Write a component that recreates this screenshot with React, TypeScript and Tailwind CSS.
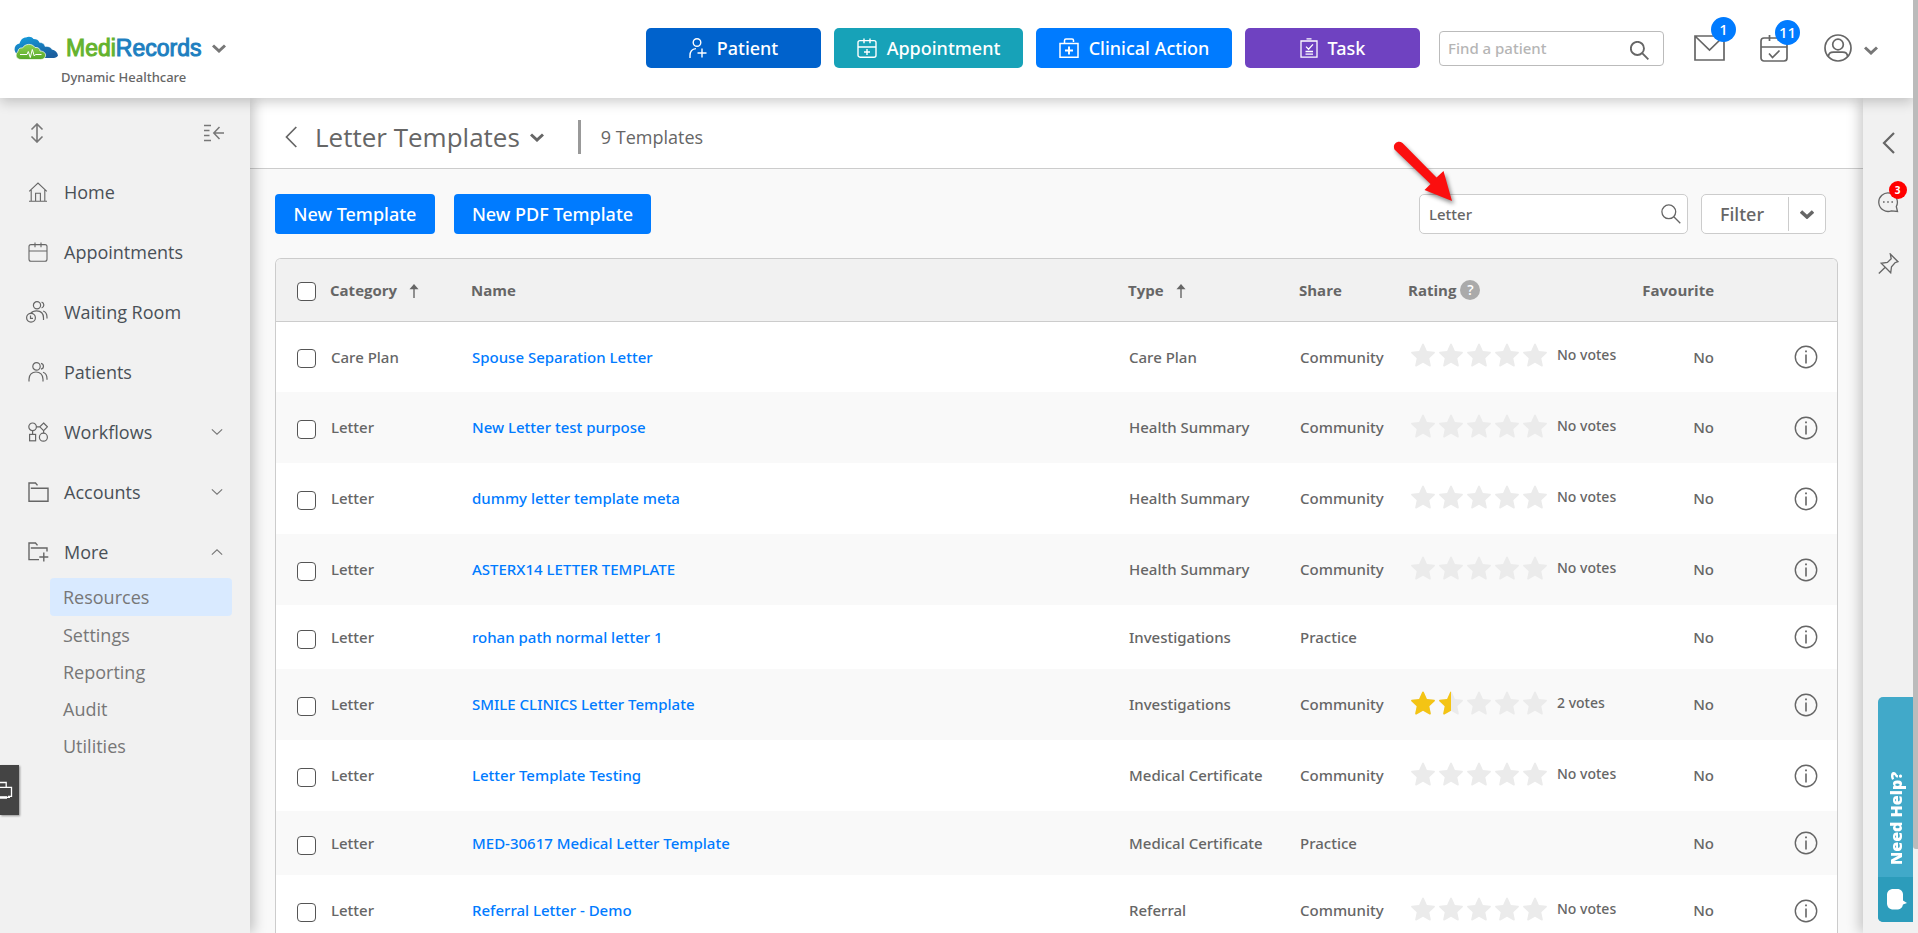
import React from "react";

type IconProps = { className?: string; children: React.ReactNode; box?: string; sw?: number };

function Icon({ className = "", children, box = "0 0 24 24", sw = 1.5 }: IconProps) {
  return (
    <svg
      viewBox={box}
      fill="none"
      stroke="currentColor"
      strokeWidth={sw}
      className={"shrink-0 " + className}
      aria-hidden="true"
    >
      {children}
    </svg>
  );
}

const Chevron = ({ className = "", sw = 3 }: { className?: string; sw?: number }) => (
  <Icon box="0 0 14 9" sw={sw} className={className}>
    <path d="M1 1.5 7 7l6-5.5" />
  </Icon>
);

const SearchIcon = ({ className = "", sw = 1.5 }: { className?: string; sw?: number }) => (
  <Icon box="0 0 20 20" sw={sw} className={className}>
    <circle cx="7.8" cy="7.8" r="6.9" />
    <path d="m12.8 12.8 6.5 6.5" />
  </Icon>
);

const icons = {
  home: (
    <Icon box="0 0 20 20" sw={1.1} className="size-5">
      <path d="M1.2 9.4 10 1l8.8 8.4M3.2 8v11M16.8 8v11M1 19.2h18M7.6 19v-7.7h4.8V19" />
    </Icon>
  ),
  calendar: (
    <Icon box="0 0 20 20" sw={1.1} className="size-5">
      <rect x="1" y="2.6" width="18" height="16.6" rx="2" />
      <path d="M1 9h18M7 .4v4.8M13 .4v4.8" />
    </Icon>
  ),
  waiting: (
    <Icon box="0 0 22 22" sw={1.2} className="-ml-0.5 size-[22px]">
      <circle cx="11" cy="4.3" r="3.6" />
      <path d="M15.6 1.2a3 3 0 0 1 0 5.8M4.8 12.4C6 10.6 8.3 9.8 10.6 9.8c4.5 0 6.9 2.7 6.9 7.2v2M17.2 10c2.8 1 3.8 3.2 3.8 6.2v1.2" />
      <circle cx="5" cy="16.8" r="4.4" />
      <path d="M4.5 14.5v2.8H7" />
    </Icon>
  ),
  patients: (
    <Icon box="0 0 20 20" sw={1.2} className="size-5">
      <circle cx="8.5" cy="4.4" r="3.7" />
      <path d="M1 19.5v-2.3C1 12.8 4 10 8 10s7 2.8 7 7.2v2.3M13 1.3a3 3 0 0 1 0 5.9M15 10.2c2.7 1 4 3.2 4 6.2v1.4" />
    </Icon>
  ),
  workflows: (
    <Icon box="0 0 20 20" sw={1.2} className="size-5">
      <circle cx="4.6" cy="4.8" r="3.8" />
      <path d="M8.4 4.8h3.4M15.6 1l3.8 3.8-3.8 3.8-3.8-3.8zM4.6 8.6v3.6M15.6 8.6v2.6" />
      <rect x="1.6" y="12.4" width="6" height="6.4" />
      <circle cx="15.4" cy="15.2" r="4" />
    </Icon>
  ),
  accounts: (
    <Icon box="0 0 21 20" sw={1.4} className="h-5 w-[21px]">
      <path d="M2.8 6.2h17.2v13H1V1h6.5l2 2.4" />
    </Icon>
  ),
  more: (
    <Icon box="0 0 21 20" sw={1.4} className="h-5 w-[21px]">
      <path d="M2.8 6h16.2v3.5M11 17.6H1V1h6.5l2 2.4M15.8 10.5v9M11.3 15h9" />
    </Icon>
  ),
};

const navItems = [
  { label: "Home", icon: icons.home },
  { label: "Appointments", icon: icons.calendar },
  { label: "Waiting Room", icon: icons.waiting },
  { label: "Patients", icon: icons.patients },
  { label: "Workflows", icon: icons.workflows, arrow: "down" },
  { label: "Accounts", icon: icons.accounts, arrow: "down" },
  { label: "More", icon: icons.more, arrow: "up" },
];

const actions = [
  {
    label: "Patient",
    tone: "w-[175px] bg-[#0062cc]",
    icon: (
      <Icon box="0 0 18 20" sw={1.4} className="h-5 w-[18px]">
        <circle cx="8" cy="4.5" r="3.8" />
        <path d="M1 20v-2.5C1 13.5 3.2 11 7 10.6M13 10.5v9M8.5 15h9" />
      </Icon>
    ),
  },
  {
    label: "Appointment",
    tone: "w-[189px] bg-[#17a2b8]",
    icon: (
      <Icon box="0 0 20 20" sw={1.4} className="size-5">
        <rect x="1" y="2.6" width="18" height="16.6" rx="2" />
        <path d="M1 9h18M7 .4v4.8M13 .4v4.8M10 11v6M7 14h6" />
      </Icon>
    ),
  },
  {
    label: "Clinical Action",
    tone: "w-[196px] bg-[#007bff]",
    icon: (
      <Icon box="0 0 20 20" sw={1.5} className="size-5">
        <path d="M1 5.5h18v13.7H1zM5.5 5V2.5Q5.5 1 7 1h6q1.5 0 1.5 1.5V4" />
        <path d="M10 8.5v8M6 12.5h8" strokeWidth={1.9} />
      </Icon>
    ),
  },
  {
    label: "Task",
    tone: "w-[175px] bg-[#6f42c1]",
    icon: (
      <Icon box="0 0 18 20" sw={1.3} className="h-5 w-[18px]">
        <path d="M1 3h16v16.2H1zM6.5.8h5M6 8.6l2.6 2.6L13 6.4M5.5 13.5h7.5M5.5 16.2h7.5" />
      </Icon>
    ),
  },
];

type Row = { category: string; name: string; type: string; share: string; rating?: number; votes?: string };

const rows: Row[] = [
  { category: "Care Plan", name: "Spouse Separation Letter", type: "Care Plan", share: "Community", rating: 0, votes: "No votes" },
  { category: "Letter", name: "New Letter test purpose", type: "Health Summary", share: "Community", rating: 0, votes: "No votes" },
  { category: "Letter", name: "dummy letter template meta", type: "Health Summary", share: "Community", rating: 0, votes: "No votes" },
  { category: "Letter", name: "ASTERX14 LETTER TEMPLATE", type: "Health Summary", share: "Community", rating: 0, votes: "No votes" },
  { category: "Letter", name: "rohan path normal letter 1", type: "Investigations", share: "Practice" },
  { category: "Letter", name: "SMILE CLINICS Letter Template", type: "Investigations", share: "Community", rating: 1.5, votes: "2 votes" },
  { category: "Letter", name: "Letter Template Testing", type: "Medical Certificate", share: "Community", rating: 0, votes: "No votes" },
  { category: "Letter", name: "MED-30617 Medical Letter Template", type: "Medical Certificate", share: "Practice" },
  { category: "Letter", name: "Referral Letter - Demo", type: "Referral", share: "Community", rating: 0, votes: "No votes" },
];

const starPath =
  "M12 .6c.4 0 .7.3.9.7l3 6.7 7.2.8c.8.1 1.1 1 .5 1.5l-5.3 4.9 1.5 7.4c.1.7-.5 1.2-1.2.8L12 19.7l-6.6 3.7c-.7.4-1.3-.1-1.2-.8l1.5-7.4L.4 10.3c-.6-.5-.3-1.4.5-1.5l7.2-.8 3-6.7c.2-.4.5-.7.9-.7z";

function Star({ fill }: { fill: number }) {
  return (
    <svg viewBox="0 0 24 24" className="size-6" aria-hidden="true">
      <path d={starPath} fill="#ebebeb" />
      {fill >= 1 && <path d={starPath} fill="#f4c414" />}
      {fill === 0.5 && (
        <path
          d="M12 .6c-.4 0-.7.3-.9.7L8.1 8l-7.2.8c-.8.1-1.1 1-.5 1.5l5.3 4.9-1.5 7.4c-.1.7.5 1.2 1.2.8l6.6-3.7z"
          fill="#f4c414"
        />
      )}
    </svg>
  );
}

function Checkbox({ label }: { label: string }) {
  return (
    <input
      type="checkbox"
      aria-label={label}
      className="mt-1 block size-[19px] appearance-none rounded-[4px] border border-[#555] bg-white"
    />
  );
}

const SortUp = () => (
  <svg viewBox="0 0 10 14" className="mt-0.5 h-3.5 w-2.5 shrink-0" aria-hidden="true">
    <path d="M5 0 9.5 5.2H.5z" fill="#666" />
    <path d="M5 3v11" stroke="#666" strokeWidth="1.4" />
  </svg>
);

function Logo() {
  return (
    <svg viewBox="0 0 44 24" className="h-6 w-11" aria-hidden="true">
      <defs>
        <linearGradient id="sky" x1="0" y1="0" x2="0.6" y2="1">
          <stop offset="0" stopColor="#14a0e0" />
          <stop offset="1" stopColor="#1b5f9f" />
        </linearGradient>
        <linearGradient id="leaf" x1="0" y1="0" x2="0" y2="1">
          <stop offset="0" stopColor="#8fd14f" />
          <stop offset="1" stopColor="#56a82a" />
        </linearGradient>
      </defs>
      <path
        d="M3 18C-1 15 0 8.500 5.500 7.500 7 3 9.500 1.500 12 1.500c3-1.500 6-.5 7.500 1.500 3 0 5 1 6 3.500 3 0 5 1.500 5.500 4 3-.5 6 .5 7 3 3 .5 5.500 3 6 6-1 2-3 2.500-6 2.500H12z"
        fill="url(#sky)"
      />
      <path d="M25.500 6.500c3 0 5 1.500 5.500 4 3-.5 6 .5 7 3" fill="none" stroke="#fff" strokeWidth=".4" />
      <path
        d="M7 23.500c-5 0-6.500-5.500-3-8 0-3 2.500-4 4.500-3.500C11 7.500 18 7 21 11.500c3-.5 5 1 5 3.500 4 0 6 2.500 5.500 5-.4 2.300-2.500 3.500-5 3.500z"
        fill="url(#leaf)"
        stroke="#fff"
        strokeWidth=".7"
      />
      <path d="M6 18.500h7l1.300-3 2 6 2-8 2 6.500 1.200-1.500h6" fill="none" stroke="#fff" strokeWidth="1" />
    </svg>
  );
}

function Header() {
  return (
    <header className="relative z-20 flex h-[98px] shrink-0 items-start justify-between bg-white pl-3.5 pr-[35px] shadow-[0_4px_12px_rgba(0,0,0,0.2)]">
      <div className="pt-8">
        <button type="button" className="flex h-8 items-center" aria-label="MediRecords menu">
          <Logo />
          <span className="ml-2 font-['Liberation_Sans',Arial,sans-serif] text-[23px] leading-8 text-[#1e7fc0] [-webkit-text-stroke:1px_currentColor]">
            <span className="text-[#65b32e]">Medi</span>Records
          </span>
          <Chevron className="ml-2.5 h-[9px] w-3.5 text-[#777]" />
        </button>
        <p className="pl-[47px] text-[13px] font-medium leading-[26px] text-[#666]">Dynamic Healthcare</p>
      </div>
      <div className="flex items-center pt-7 text-[#666]">
        <div className="flex gap-[13px]">
          {actions.map((a) => (
            <button
              key={a.label}
              type="button"
              className={"flex h-10 items-center justify-center gap-2.5 rounded-[5px] text-lg font-medium text-white " + a.tone}
            >
              {a.icon}
              {a.label}
            </button>
          ))}
        </div>
        <div className="ml-[19px] flex h-[35px] w-[225px] items-center rounded-[4px] border border-[#bbb] bg-white pl-2 pr-3.5">
          <input
            type="text"
            aria-label="Find a patient"
            placeholder="Find a patient"
            className="min-w-0 flex-1 bg-transparent text-[15px] font-medium outline-none placeholder:text-[#b5b5b5]"
          />
          <SearchIcon className="mt-1 size-[19px]" sw={2} />
        </div>
        <button type="button" aria-label="Messages" className="relative ml-[30px]">
          <Icon box="0 0 31 26" sw={1.7} className="h-[26px] w-[31px]">
            <path d="M1 1h29v24H1zM1.500 1.500l14 13.500 14-13.500" />
          </Icon>
          <span className="absolute -top-[18px] left-[17px] flex size-[25px] items-center justify-center rounded-full bg-[#007bff] text-[15px] font-medium text-white">
            1
          </span>
        </button>
        <button type="button" aria-label="Calendar" className="relative ml-[35px]">
          <Icon box="0 0 28 28" sw={1.7} className="size-7">
            <rect x="1" y="4" width="26" height="23" rx="3" />
            <path d="M1 13h26M9.500 1v6M18.500 1v6M9 19.500l3.500 4 7-7" />
          </Icon>
          <span className="absolute -top-3.5 left-[15px] flex size-[25px] items-center justify-center rounded-full bg-[#007bff] text-[15px] font-medium text-white">
            11
          </span>
        </button>
        <button type="button" aria-label="Account" className="ml-9 flex items-center gap-3">
          <Icon box="0 0 28 28" sw={1.7} className="size-7">
            <circle cx="14" cy="14" r="13" />
            <circle cx="14" cy="10.5" r="5.3" />
            <path d="M4.500 22.500c0-3 2.500-4.300 5-4.300h9c2.500 0 5 1.300 5 4.300" />
          </Icon>
          <Chevron className="mt-1 h-[9px] w-3.5 text-[#777]" />
        </button>
      </div>
    </header>
  );
}

function Sidebar() {
  return (
    <aside className="relative z-10 w-[250px] shrink-0 bg-[#f1f1f1] shadow-[4px_0_12px_rgba(0,0,0,0.22)]">
      <div className="flex h-16 items-center justify-between pl-[30px] pr-[26px] pt-1.5 text-[#777]">
        <button type="button" aria-label="Resize menu">
          <Icon box="0 0 14 20" sw={1.6} className="h-5 w-3.5">
            <path d="M7 1.500v17M1.500 6.500 7 1l5.500 5.500M1.500 13.500 7 19l5.500-5.500" />
          </Icon>
        </button>
        <button type="button" aria-label="Collapse menu">
          <Icon box="0 0 20 18" sw={1.5} className="h-[18px] w-5">
            <path d="M0 1.500h7M0 6.500h5.500M0 11.500h5.500M0 16.500h7M9.500 9H20M15.500 3 9.800 9l5.700 6" />
          </Icon>
        </button>
      </div>
      <nav className="font-['Open_Sans',sans-serif] text-lg font-medium">
        {navItems.map((n) => (
          <a key={n.label} href="#" className="flex h-[60px] items-center pl-7 pr-[27px] text-[#495057]">
            <span className="flex w-9 items-center text-[#666]">{n.icon}</span>
            <span className="flex-1">{n.label}</span>
            {n.arrow && (
              <Chevron sw={1.3} className={n.arrow === "up" ? "h-2 w-3 rotate-180 text-[#777]" : "h-2 w-3 text-[#777]"} />
            )}
          </a>
        ))}
        <div className="-mt-1 ml-[50px] mr-[18px] text-[#777]">
          <a href="#" className="flex h-[38px] items-center rounded-[4px] bg-[#d9eaff] pl-[13px]">Resources</a>
          {["Settings", "Reporting", "Audit", "Utilities"].map((s) => (
            <a key={s} href="#" className="flex h-[37px] items-center pl-[13px]">{s}</a>
          ))}
        </div>
      </nav>
      <button
        type="button"
        aria-label="Open toolbox"
        className="absolute left-0 top-[667px] flex h-[50px] w-[19px] items-center bg-[#444] text-white shadow-[1px_1px_2px_rgba(0,0,0,0.4)]"
      >
        <Icon box="0 0 13 20" sw={1.3} className="h-5 w-[13px]">
          <path d="M0 2.500h6.200v4.300M0 7.300h11.500v9H8M0 17.300h10" />
          <path d="M0 17.500h7" strokeWidth={2.5} />
        </Icon>
      </button>
    </aside>
  );
}

function TemplateTable() {
  const th = "p-0 text-left text-[15px] font-bold";
  return (
    <div className="mx-[25px] mt-6 overflow-hidden rounded-t-[6px] border border-b-0 border-[#ccc] bg-white">
      <table className="w-full table-fixed border-collapse text-[15px] font-medium text-[#666]">
        <colgroup>
          <col className="w-[54px]" />
          <col className="w-[141px]" />
          <col />
          <col className="w-[171px]" />
          <col className="w-[109px]" />
          <col className="w-[208px]" />
          <col className="w-[98px]" />
          <col className="w-[123px]" />
        </colgroup>
        <thead className="font-['Open_Sans',sans-serif]">
          <tr className="h-[62px] border-b border-[#ccc] bg-[#f1f1f1]">
            <th className="p-0 pl-[21px]"><Checkbox label="Select all templates" /></th>
            <th className={th}><span className="flex items-center gap-3">Category <SortUp /></span></th>
            <th className={th}>Name</th>
            <th className={th}><span className="flex items-center gap-3">Type <SortUp /></span></th>
            <th className={th}>Share</th>
            <th className={th}>
              <span className="flex items-center gap-1">
                Rating
                <span className="flex size-5 items-center justify-center rounded-full bg-[#aaa] text-sm font-semibold text-white">?</span>
              </span>
            </th>
            <th className="p-0 text-right text-[15px] font-bold">Favourite</th>
            <th className="p-0" aria-label="Details" />
          </tr>
        </thead>
        <tbody>
          {rows.map((r) => (
            <tr key={r.name} className={(r.votes ? "h-[71px]" : "h-16") + " even:bg-[#f9f9f9]"}>
              <td className="p-0 pl-[21px]"><Checkbox label={"Select " + r.name} /></td>
              <td className="p-0 pl-px">{r.category}</td>
              <td className="p-0 pl-px"><a href="#" className="text-[#007bff]">{r.name}</a></td>
              <td className="p-0 pl-px">{r.type}</td>
              <td className="p-0 pl-px">{r.share}</td>
              <td className="p-0">
                {r.votes && (
                  <div className="flex items-center whitespace-nowrap pb-1 pl-[3px]">
                    <div className="flex shrink-0 gap-1">
                      {[0, 1, 2, 3, 4].map((i) => (
                        <Star key={i} fill={Math.max(0, Math.min(1, (r.rating ?? 0) - i))} />
                      ))}
                    </div>
                    <span className="ml-2.5 text-sm">{r.votes}</span>
                  </div>
                )}
              </td>
              <td className="p-0 text-right">No</td>
              <td className="p-0 pr-[19px] text-right">
                <button type="button" aria-label={"Details of " + r.name} className="inline-block align-middle">
                  <Icon box="0 0 24 24" sw={1.4} className="size-6">
                    <circle cx="12" cy="12" r="10.7" />
                    <path d="M12 9.500v9" strokeWidth={1.6} />
                    <path d="M12 5.500v1.800" strokeWidth={1.8} />
                  </Icon>
                </button>
              </td>
            </tr>
          ))}
        </tbody>
      </table>
    </div>
  );
}

function RightRail() {
  return (
    <aside className="relative z-10 flex w-[50px] shrink-0 flex-col items-center bg-[#f1f1f1] pt-[34px] text-[#666] shadow-[-4px_0_12px_rgba(0,0,0,0.2)]">
      <button type="button" aria-label="Expand panel">
        <Icon box="0 0 13 22" sw={2.2} className="h-[22px] w-[13px]">
          <path d="M12 1 2 11l10 10" />
        </Icon>
      </button>
      <button type="button" aria-label="Chat" className="relative mt-[38px]">
        <Icon box="0 0 21 21" sw={1.3} className="size-[21px]">
          <path d="M19.500 19.500 18.300 14.500A9.300 9.300 0 1 0 13.500 18.800z" />
          <path d="M5 10h1.600M9.200 10h1.600M13.400 10H15" strokeWidth={1.6} />
        </Icon>
        <span className="absolute -top-[11px] left-[11px] flex size-[18px] items-center justify-center rounded-full bg-[#ff0000] text-[10px] font-bold text-white">
          3
        </span>
      </button>
      <button type="button" aria-label="Pin" className="mt-10">
        <Icon box="0 0 21 21" sw={1.3} className="size-[21px]">
          <path d="M12.300 1 20 8.700l-3 1-3.500 4-.8 6.100-9.500-9.500 6.200-.9 3.800-3.600zM7.500 14 .8 20.500" />
        </Icon>
      </button>
      <button
        type="button"
        className="absolute right-0 top-[599px] flex h-[225px] w-[35px] flex-col justify-end overflow-hidden rounded-l-[5px] bg-[#41a9c9] text-white"
      >
        <span className="flex flex-1 rotate-180 items-center self-center pt-3 font-['Open_Sans',sans-serif] text-base font-extrabold [writing-mode:vertical-rl]">
          Need Help?
        </span>
        <span className="flex h-[45px] w-full items-center justify-center bg-[#2c9cbb]">
          <svg viewBox="0 0 20 21" className="ml-0.5 h-[21px] w-5" aria-hidden="true">
            <path d="M5 0h6.500q4 1 4.500 5v6.500l4 2.500-4 1.500Q15 20 11 20.500H5Q.5 19.500 0 15V5Q.5 1 5 0z" fill="#fff" />
          </svg>
        </span>
      </button>
    </aside>
  );
}

export default function App() {
  return (
    <div className="flex h-screen overflow-hidden font-['Noto_Sans','Open_Sans',sans-serif]">
      <div className="flex min-w-0 flex-1 flex-col">
        <Header />
        <div className="flex min-h-0 flex-1">
          <Sidebar />
          <main className="min-w-0 flex-1 overflow-hidden bg-[#f9f9f9] text-[#666]">
            <div className="flex h-[71px] items-center border-b border-[#ccc] bg-white pl-[35px] pt-2 font-['Open_Sans',sans-serif]">
              <button type="button" aria-label="Back">
                <Icon box="0 0 12 22" sw={1.7} className="h-[22px] w-3">
                  <path d="M11.300 1 1.500 11l9.800 10" />
                </Icon>
              </button>
              <h1 className="ml-[18px] text-[26px] font-medium">Letter Templates</h1>
              <Chevron className="ml-2.5 h-[9px] w-3.5" />
              <span className="ml-[34px] h-[34px] w-[3px] bg-[#999]" />
              <span className="ml-5 text-lg font-medium">9 Templates</span>
            </div>
            <div className="flex justify-between pl-[25px] pr-[37px] pt-[25px]">
              <div className="flex gap-[19px]">
                <button type="button" className="h-10 w-40 rounded-[4px] bg-[#007bff] text-lg font-medium text-white">
                  New Template
                </button>
                <button type="button" className="h-10 w-[197px] rounded-[4px] bg-[#007bff] text-lg font-medium text-white">
                  New PDF Template
                </button>
              </div>
              <div className="flex gap-[13px]">
                <div className="relative flex h-10 w-[269px] items-center rounded-[5px] border border-[#ccc] bg-white pl-[9px] pr-1.5">
                  <input
                    type="text"
                    aria-label="Search templates"
                    defaultValue="Letter"
                    className="min-w-0 flex-1 bg-transparent text-[15px] font-medium outline-none"
                  />
                  <SearchIcon className="size-5" sw={1.3} />
                  <svg
                    viewBox="0 0 68 70"
                    className="absolute -left-[30px] -top-[56px] h-[70px] w-[68px] drop-shadow-[2px_3px_2px_rgba(0,0,0,0.45)]"
                    aria-hidden="true"
                  >
                    <path d="M4.500 10.500C2 5 8 .5 12.500 4l34 34.500 7-6.500 8.500 30-27.500-11 6-6z" fill="#fb0f0f" />
                  </svg>
                </div>
                <div className="flex h-10 w-[125px] items-center rounded-[5px] border border-[#ccc] bg-white">
                  <button type="button" className="h-full flex-1 pr-1.5 text-lg font-medium">Filter</button>
                  <span className="h-[34px] w-px bg-[#ccc]" />
                  <button type="button" aria-label="Filter options" className="flex h-full w-9 items-center justify-center">
                    <Chevron className="h-[9px] w-3.5" sw={3.5} />
                  </button>
                </div>
              </div>
            </div>
            <TemplateTable />
          </main>
          <RightRail />
        </div>
      </div>
      <div className="relative z-30 w-[5px] shrink-0 bg-[#f1f1f1]">
        <div className="h-[91%] rounded-bl-[3px] bg-[#bbb]" />
      </div>
    </div>
  );
}
